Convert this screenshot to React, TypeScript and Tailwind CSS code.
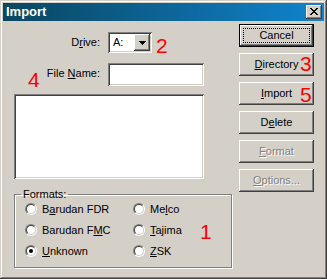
import React from "react";

const U = ({ children }: { children: React.ReactNode }) => (
  <span className="underline underline-offset-[1px] decoration-[1px]">{children}</span>
);

function Btn({
  children,
  disabled,
  isDefault,
}: {
  children: React.ReactNode;
  disabled?: boolean;
  isDefault?: boolean;
}) {
  if (isDefault) {
    return (
      <div className="w-[75px] h-[23px] border border-black bg-[#d4d0c8] flex shadow-[inset_-1px_-1px_#404040,inset_1px_1px_#ffffff,inset_-2px_-2px_#808080,inset_2px_2px_#d4d0c8]">
        <div className="flex-1 m-[3px] border border-dotted border-black flex items-center justify-center">
          {children}
        </div>
      </div>
    );
  }
  return (
    <div
      className={
        disabled
          ? "w-[75px] h-[23px] bg-[#d4d0c8] flex items-center justify-center text-[#808080] [text-shadow:1px_1px_0_#ffffff] shadow-[inset_-1px_-1px_#404040,inset_1px_1px_#ffffff,inset_-2px_-2px_#808080,inset_2px_2px_#d4d0c8]"
          : "w-[75px] h-[23px] bg-[#d4d0c8] flex items-center justify-center shadow-[inset_-1px_-1px_#404040,inset_1px_1px_#ffffff,inset_-2px_-2px_#808080,inset_2px_2px_#d4d0c8]"
      }
    >
      {children}
    </div>
  );
}

function Radio({ checked, children }: { checked?: boolean; children: React.ReactNode }) {
  return (
    <div className="h-[16px] flex items-center gap-[5px]">
      <div className="w-[12px] h-[12px] rounded-full border border-t-[#808080] border-l-[#808080] border-r-[#ffffff] border-b-[#ffffff] flex">
        <div className="flex-1 rounded-full border border-t-[#404040] border-l-[#404040] border-r-[#d4d0c8] border-b-[#d4d0c8] bg-white flex items-center justify-center">
          {checked ? <div className="w-[4px] h-[4px] rounded-full bg-black" /> : null}
        </div>
      </div>
      <span className="leading-[13px]">{children}</span>
    </div>
  );
}

export default function App() {
  return (
    <div className="relative w-[327px] h-[279px] bg-[#d4d0c8] p-[3px] font-['Liberation_Sans',Arial,sans-serif] text-[11px] leading-[13px] text-black shadow-[inset_-1px_-1px_#404040,inset_1px_1px_#d4d0c8,inset_-2px_-2px_#808080,inset_2px_2px_#ffffff]">
      {/* Title bar */}
      <div className="h-[18px] flex items-center bg-gradient-to-r from-[#0a4660] to-[#1084d0] pl-[3px] pr-[2px]">
        <span className="flex-1 text-white font-bold text-[13px] leading-[16px]">Import</span>
        <div className="w-[16px] h-[14px] bg-[#d4d0c8] flex items-center justify-center shadow-[inset_-1px_-1px_#404040,inset_1px_1px_#ffffff,inset_-2px_-2px_#808080,inset_2px_2px_#d4d0c8]">
          <svg width="8" height="7" viewBox="0 0 8 7" shapeRendering="crispEdges" className="-mt-px -ml-px">
            <path
              fill="#000"
              d="M0 0h2v1H0zM6 0h2v1H6zM1 1h2v1H1zM5 1h2v1H5zM2 2h4v1H2zM3 3h2v1H3zM2 4h4v1H2zM1 5h2v1H1zM5 5h2v1H5zM0 6h2v1H0zM6 6h2v1H6z"
            />
          </svg>
        </div>
      </div>

      {/* Body */}
      <div className="flex pl-[11px] pt-[3px]">
        {/* Left column */}
        <div className="w-[218px] flex flex-col">
          {/* Drive row */}
          <div className="mt-[8px] h-[21px] flex items-center">
            <span className="w-[86px] text-right">
              D<U>r</U>ive:
            </span>
            <div className="ml-[8px] w-[44px] h-[21px] bg-white flex items-center shadow-[inset_1px_1px_#808080,inset_-1px_-1px_#ffffff,inset_2px_2px_#404040,inset_-2px_-2px_#d4d0c8]">
              <span className="flex-1 pl-[5px]">A:</span>
              <div className="w-[16px] h-[17px] mr-[2px] bg-[#d4d0c8] flex items-center justify-center shadow-[inset_-1px_-1px_#404040,inset_1px_1px_#ffffff,inset_-2px_-2px_#808080,inset_2px_2px_#d4d0c8]">
                <svg width="7" height="4" viewBox="0 0 7 4" shapeRendering="crispEdges">
                  <path fill="#000" d="M0 0h7v1H0zM1 1h5v1H1zM2 2h3v1H2zM3 3h1v1H3z" />
                </svg>
              </div>
            </div>
          </div>

          {/* File name row */}
          <div className="mt-[10px] h-[23px] flex items-center">
            <span className="w-[86px] text-right -mt-[3px]">
              File <U>N</U>ame:
            </span>
            <div className="ml-[8px] w-[96px] h-[23px] bg-white shadow-[inset_1px_1px_#808080,inset_-1px_-1px_#ffffff,inset_2px_2px_#404040,inset_-2px_-2px_#d4d0c8]" />
          </div>

          {/* List box */}
          <div className="mt-[8px] w-[190px] h-[85px] bg-white shadow-[inset_1px_1px_#808080,inset_-1px_-1px_#ffffff,inset_2px_2px_#404040,inset_-2px_-2px_#d4d0c8]" />

          {/* Formats group */}
          <fieldset className="mt-[9px] w-[218px] h-[80px] border border-[#808080] shadow-[inset_1px_1px_#ffffff,1px_1px_#ffffff]">
            <legend className="ml-[6px] px-[2px] leading-[13px]">Formats:</legend>
            <div className="pl-[10px] grid grid-cols-[108px_1fr] gap-y-[5px]">
              <Radio>
                B<U>a</U>rudan FDR
              </Radio>
              <Radio>
                Me<U>l</U>co
              </Radio>
              <Radio>
                Barudan F<U>M</U>C
              </Radio>
              <Radio>
                <U>T</U>ajima
              </Radio>
              <Radio checked>
                <U>U</U>nknown
              </Radio>
              <Radio>
                <U>Z</U>SK
              </Radio>
            </div>
          </fieldset>
        </div>

        {/* Right column: buttons */}
        <div className="ml-[7px] flex flex-col gap-[6px]">
          <Btn isDefault>Cancel</Btn>
          <Btn>
            <U>D</U>irectory
          </Btn>
          <Btn>
            <U>I</U>mport
          </Btn>
          <Btn>
            D<U>e</U>lete
          </Btn>
          <Btn disabled>
            <U>F</U>ormat
          </Btn>
          <Btn disabled>
            <U>O</U>ptions...
          </Btn>
        </div>
      </div>

      {/* Red annotation digits */}
      <span className="absolute left-[156px] top-[35px] text-[21px] leading-[21px] text-[#ff0000]">2</span>
      <span className="absolute left-[28px] top-[69px] text-[21px] leading-[21px] text-[#ff0000]">4</span>
      <span className="absolute left-[300px] top-[53px] text-[21px] leading-[21px] text-[#ff0000]">3</span>
      <span className="absolute left-[300px] top-[84px] text-[21px] leading-[21px] text-[#ff0000]">5</span>
      <span className="absolute left-[200px] top-[221px] text-[21px] leading-[21px] text-[#ff0000]">1</span>
    </div>
  );
}
